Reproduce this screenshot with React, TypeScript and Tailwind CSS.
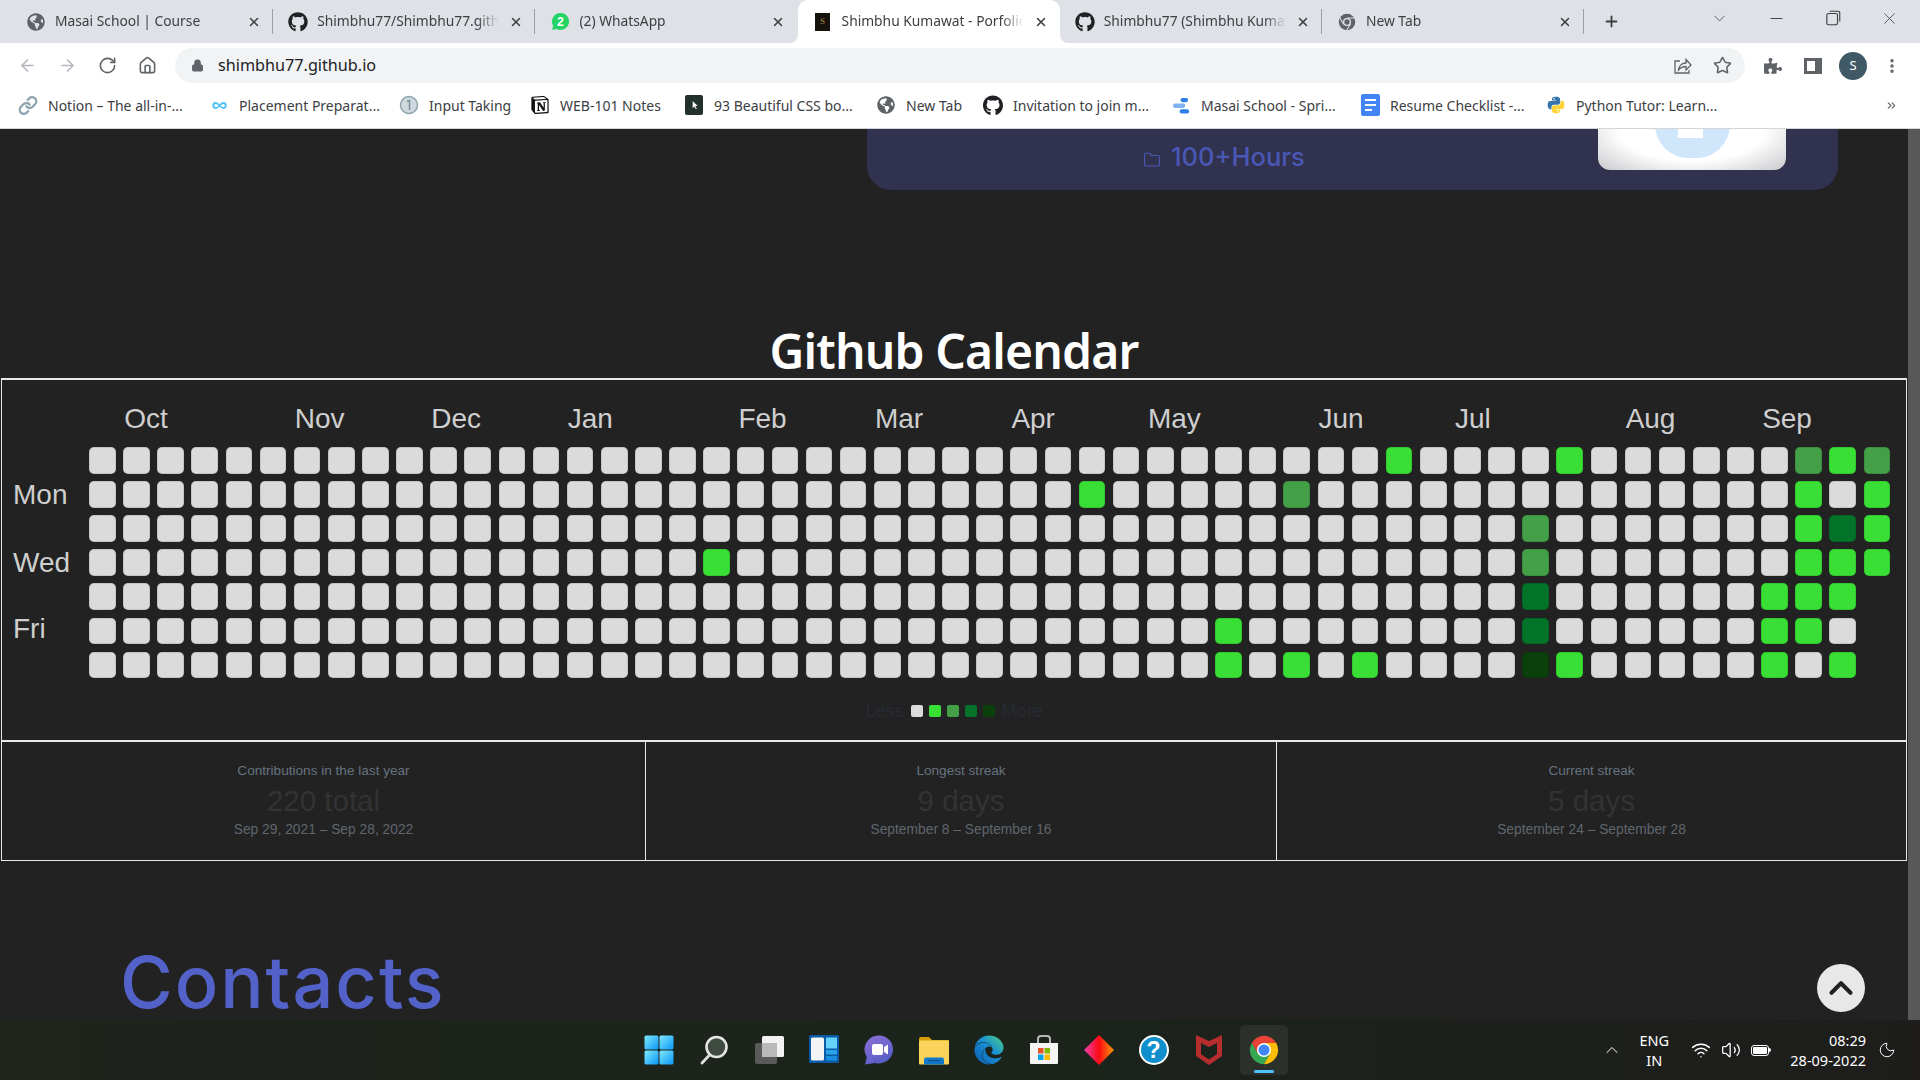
import React from 'react';
import { ArrowLeft, ArrowRight, RotateCw, House, Lock, Star, X, Plus, ChevronDown, Minus, Link, Infinity as InfinityIcon, ChevronUp, Wifi, Volume2, Moon, Folder, EllipsisVertical, ChevronsRight } from 'lucide-react';
import { FaGithub, FaGlobeAmericas, FaPuzzlePiece, FaEdge } from 'react-icons/fa';
import { SiNotion } from 'react-icons/si';

const ChromeLogo = ({ className = '' }: { className?: string }) => (
  <svg viewBox="0 0 24 24" className={className}>
    <path fill="#ea4335" d="M20.66 7A10 10 0 0 0 3.34 7L7.67 14.5 12 7z" />
    <path fill="#34a853" d="M3.34 7A10 10 0 0 0 12 22L16.33 14.5H7.67z" />
    <path fill="#fbbc04" d="M12 22A10 10 0 0 0 20.66 7H12L16.33 14.5z" />
    <circle cx="12" cy="12" r="5" fill="#fff" />
    <circle cx="12" cy="12" r="3.9" fill="#4285f4" />
  </svg>
);

const WhatsappIcon = () => (
  <svg viewBox="0 0 20 20" className="w-[19px] h-[19px]">
    <path fill="#25d366" d="M10 1a9 9 0 0 0-7.7 13.6L1.2 19l4.5-1.1A9 9 0 1 0 10 1z" />
    <circle cx="10" cy="10" r="6.6" fill="#25d366" />
    <text x="10" y="14.5" textAnchor="middle" fontSize="13" fontWeight="700" fill="#fff" fontFamily="Liberation Sans">2</text>
  </svg>
);

const PortfolioIcon = () => (
  <div className="w-[15px] h-[18px] bg-[#15120c] flex items-center justify-center text-[9px] leading-none text-[#b08d45] font-['Liberation_Serif',serif]">S</div>
);

function ChromeMono() {
  return (
    <svg viewBox="0 0 24 24" className="w-[18px] h-[18px]">
      <circle cx="12" cy="12" r="11" fill="#5f6368" />
      <circle cx="12" cy="12" r="5.4" fill="#dee1e6" />
      <circle cx="12" cy="12" r="3.6" fill="#5f6368" />
      <path d="M12 6.6h9.6M7.4 15 2.6 6.8M16.6 14.8 11.6 23" stroke="#dee1e6" strokeWidth="1.4" />
    </svg>
  );
}

const tabs = [
  { icon: <FaGlobeAmericas className="w-[18px] h-[18px] text-[#5f6368]" />, title: 'Masai School | Course' },
  { icon: <FaGithub className="w-5 h-5 text-[#202124]" />, title: 'Shimbhu77/Shimbhu77.github.io' },
  { icon: <WhatsappIcon />, title: '(2) WhatsApp' },
  { icon: <PortfolioIcon />, title: 'Shimbhu Kumawat - Porfolio Website', active: true },
  { icon: <FaGithub className="w-5 h-5 text-[#202124]" />, title: 'Shimbhu77 (Shimbhu Kumawat)' },
  { icon: <ChromeMono />, title: 'New Tab' },
];

const TabBar = () => (
  <div className="h-[43px] bg-[#dee1e6] flex items-end pl-[11px] shrink-0">
    {tabs.map((t, i) => (
      <div
        key={t.title}
        className={`relative w-[262.2px] h-[43px] flex items-center pl-[15px] ${t.active ? 'bg-white rounded-t-[10px]' : ''}`}
      >
        <div className="w-5 flex justify-center shrink-0">{t.icon}</div>
        <div className="ml-[9px] w-[182px] overflow-hidden whitespace-nowrap text-[13.8px] text-[#3c4043] [mask-image:linear-gradient(to_right,black_88%,transparent)]">
          {t.title}
        </div>
        <X className="ml-[10px] w-[14px] h-[14px] text-[#3c4043] shrink-0" strokeWidth={2.6} />
        {!t.active && i !== 2 && (
          <div className="absolute right-0 top-[9px] h-[25px] w-px bg-[#9aa0a6]" />
        )}
        {t.active && (
          <>
            <div className="absolute -left-2 bottom-0 w-2 h-2 bg-white"><div className="w-full h-full bg-[#dee1e6] rounded-br-[8px]" /></div>
            <div className="absolute -right-2 bottom-0 w-2 h-2 bg-white"><div className="w-full h-full bg-[#dee1e6] rounded-bl-[8px]" /></div>
          </>
        )}
      </div>
    ))}
    <div className="h-[43px] flex items-center ml-[19px]">
      <Plus className="w-[17px] h-[17px] text-[#3c4043]" strokeWidth={2.6} />
    </div>
    <div className="h-[43px] flex items-start pt-[9px] ml-[90px] gap-[38px] text-[#3c4043]">
      <ChevronDown className="w-[19px] h-[19px]" strokeWidth={1} />
      <Minus className="w-[19px] h-[19px]" strokeWidth={1.2} />
      <svg viewBox="0 0 16 16" className="w-[18px] h-[18px]" fill="none" stroke="currentColor" strokeWidth="1">
        <rect x="2.5" y="4" width="9.5" height="10" rx="1.5" />
        <path d="M5 2h7.5A1.5 1.5 0 0 1 14 3.5V11" />
      </svg>
      <X className="w-[19px] h-[19px]" strokeWidth={1} />
    </div>
  </div>
);

const Toolbar = () => (
  <div className="h-[41px] pt-[4px] bg-white flex items-center shrink-0">
    <div className="flex items-center pl-[18px] gap-[21px] w-[175px]">
      <ArrowLeft className="w-[19px] h-[19px] text-[#b4b7bb]" strokeWidth={2} />
      <ArrowRight className="w-[19px] h-[19px] text-[#b4b7bb]" strokeWidth={2} />
      <RotateCw className="w-[19px] h-[19px] text-[#5f6368]" strokeWidth={2} />
      <House className="w-[19px] h-[19px] text-[#5f6368]" strokeWidth={2} />
    </div>
    <div className="w-[1570px] h-[35px] rounded-full bg-[#f1f3f4] flex items-center pl-[16px]">
      <Lock className="w-[13px] h-[13px] text-[#5f6368] fill-[#5f6368]" />
      <span className="ml-[14px] text-[16.2px] text-[#202124]">shimbhu77.github.io</span>
      <svg viewBox="0 0 20 20" className="ml-auto w-5 h-5 text-[#5f6368]" fill="none" stroke="currentColor" strokeWidth="1.3">
        <path d="M8 5H3v12h14v-3" />
        <path d="M6.5 14c.4-4 3.4-7 7.5-7V3.5l5 5.5-5 5v-3.5c-3.500 0-5.500 1-7.500 3.500z" />
      </svg>
      <Star className="ml-[21px] mr-[13px] w-[19px] h-[19px] text-[#5f6368]" strokeWidth={2} />
    </div>
    <FaPuzzlePiece className="ml-[19px] w-[18px] h-[18px] text-[#5f6368]" />
    <div className="ml-[22px] w-[18px] h-[16px] border-[3px] border-r-[7px] border-[#5f6368]" />
    <div className="ml-[17px] w-7 h-7 rounded-full bg-[#3f5966] flex items-center justify-center text-[13px] text-white">S</div>
    <EllipsisVertical className="ml-[16px] w-[18px] h-[18px] text-[#5f6368]" strokeWidth={2.6} />
  </div>
);

const MasaiMark = () => (
  <svg viewBox="0 0 20 20" className="w-[19px] h-[19px]">
    <rect x="9" y="2" width="8" height="4.500" rx="2.200" fill="#2f7fe8" />
    <rect x="1" y="8" width="13" height="4.500" rx="2.200" fill="#7fb2f5" />
    <rect x="8" y="14" width="10" height="4.500" rx="2.200" fill="#2f7fe8" />
  </svg>
);

const DocsMark = () => (
  <div className="w-[19px] h-[22px] rounded-[2px] bg-[#4285f4] flex flex-col justify-center gap-[3px] px-[4px]">
    <div className="h-[2px] bg-white" />
    <div className="h-[2px] bg-white" />
    <div className="h-[2px] w-[7px] bg-white" />
  </div>
);

const PythonMark = () => (
  <svg viewBox="0 0 24 24" className="w-[22px] h-[22px]">
    <path fill="#3776ab" d="M11.900 2C6.900 2 7.200 4.200 7.200 4.200v2.300h4.800v.7H5.300S2 6.800 2 12s2.900 5 2.900 5h1.700v-2.400s-.1-2.900 2.800-2.900h4.800s2.700 0 2.700-2.600V4.800S16.900 2 11.900 2zM9.300 3.500a.9.9 0 1 1 0 1.700.9.9 0 0 1 0-1.700z" />
    <path fill="#ffd43b" transform="rotate(180 12 12)" d="M11.900 2C6.900 2 7.200 4.200 7.200 4.200v2.300h4.800v.7H5.300S2 6.800 2 12s2.900 5 2.900 5h1.700v-2.400s-.1-2.900 2.800-2.900h4.800s2.700 0 2.700-2.600V4.800S16.900 2 11.900 2zM9.300 3.500a.9.9 0 1 1 0 1.700.9.9 0 0 1 0-1.700z" />
  </svg>
);

const bookmarks = [
  { icon: <Link className="w-[21px] h-[21px] text-[#90a4ae]" strokeWidth={2.8} />, label: 'Notion – The all-in-...', w: 'w-[141px]' },
  { icon: <InfinityIcon className="w-[15px] h-[15px] text-[#4fc3f7]" strokeWidth={3} />, label: 'Placement Preparat...', w: 'w-[140px]' },
  {
    icon: (
      <svg viewBox="0 0 20 20" className="w-5 h-5">
        <circle cx="10" cy="10" r="8.500" fill="#cfd8dc" stroke="#90a4ae" strokeWidth="1.500" />
        <path d="M8 6.500l2.500-1V15" fill="none" stroke="#78909c" strokeWidth="1.500" />
      </svg>
    ),
    label: 'Input Taking',
    w: 'w-[81px]',
  },
  { icon: <SiNotion className="w-[18px] h-[18px] text-[#111]" />, label: 'WEB-101 Notes', w: 'w-[104px]' },
  {
    icon: (
      <div className="w-[18px] h-[20px] rounded-[2px] bg-[#22312c] flex items-center justify-center">
        <svg viewBox="0 0 12 12" className="w-[11px] h-[11px]">
          <path d="M4 1l0 8 2-2 1.500 3 1-.5L7 6.500h2.500z" fill="#fff" />
        </svg>
      </div>
    ),
    label: '93 Beautiful CSS bo...',
    w: 'w-[142px]',
  },
  { icon: <FaGlobeAmericas className="w-[18px] h-[18px] text-[#5f6368]" />, label: 'New Tab', w: 'w-[57px]' },
  { icon: <FaGithub className="w-[21px] h-[21px] text-[#202124]" />, label: 'Invitation to join m...', w: 'w-[138px]' },
  { icon: <MasaiMark />, label: 'Masai School - Spri...', w: 'w-[139px]' },
  { icon: <DocsMark />, label: 'Resume Checklist -...', w: 'w-[136px]' },
  { icon: <PythonMark />, label: 'Python Tutor: Learn...', w: 'w-[140px]' },
];

const BookmarkBar = () => (
  <div className="h-[45px] pb-[2px] bg-white border-b border-[#d3d5d8] flex items-center pl-[18px] gap-[20px] shrink-0">
    {bookmarks.map((b) => (
      <div key={b.label} className="flex items-center gap-[10px]">
        <div className="w-5 flex justify-center">{b.icon}</div>
        <span className={`${b.w} whitespace-nowrap text-[14px] text-[#3c4043]`}>{b.label}</span>
      </div>
    ))}
    <ChevronsRight className="ml-auto mr-[22px] w-[13px] h-[13px] text-[#5f6368]" />
  </div>
);

const months = [
  { name: 'Oct', col: 2 }, { name: 'Nov', col: 7 }, { name: 'Dec', col: 11 }, { name: 'Jan', col: 15 },
  { name: 'Feb', col: 20 }, { name: 'Mar', col: 24 }, { name: 'Apr', col: 28 }, { name: 'May', col: 32 },
  { name: 'Jun', col: 37 }, { name: 'Jul', col: 41 }, { name: 'Aug', col: 46 }, { name: 'Sep', col: 50 },
];

const LEVELS = ['bg-[#dcdbdb]', 'bg-[#39df35]', 'bg-[#43a047]', 'bg-[#03732a]', 'bg-[#0b3f0b]'];

// col:row -> level, everything else is empty
const active: Record<string, number> = {
  '38:0': 1, '43:0': 1, '50:0': 2, '51:0': 1, '52:0': 2,
  '29:1': 1, '35:1': 2, '50:1': 1, '52:1': 1,
  '42:2': 2, '50:2': 1, '51:2': 3, '52:2': 1,
  '18:3': 1, '42:3': 2, '50:3': 1, '51:3': 1, '52:3': 1,
  '42:4': 3, '49:4': 1, '50:4': 1, '51:4': 1,
  '33:5': 1, '42:5': 3, '49:5': 1, '50:5': 1,
  '33:6': 1, '35:6': 1, '37:6': 1, '42:6': 4, '43:6': 1, '49:6': 1, '51:6': 1,
};

const cells: { key: string; level: number }[] = [];
for (let c = 0; c < 53; c++) {
  for (let r = 0; r < 7; r++) {
    if (c === 52 && r > 3) continue;
    cells.push({ key: `${c}:${r}`, level: active[`${c}:${r}`] ?? 0 });
  }
}

const dayLabels = ['', 'Mon', '', 'Wed', '', 'Fri', ''];

const Calendar = () => (
  <div className="ml-px w-[1906px] h-[364px] border-2 border-l border-r border-[#e8e8e8] font-['Liberation_Sans',sans-serif]">
    <div className="flex">
      <div className="w-[87px] pl-[11px] pt-[68px] grid grid-rows-[repeat(7,26.67px)] gap-y-[7.46px] shrink-0">
        {dayLabels.map((d, i) => (
          <div key={i} className={`text-[28px] leading-[26.67px] text-[#cfcfcf] ${d === 'Fri' ? '-mt-[3px]' : ''}`}>{d}</div>
        ))}
      </div>
      <div>
        <div className="h-[67px] grid grid-cols-[repeat(53,26.67px)] gap-x-[7.48px] pt-[23px] pl-px">
          {months.map((m) => (
            <div key={m.name} className="text-[28px] leading-[32px] whitespace-nowrap text-[#cfcfcf]" style={{ gridColumnStart: m.col }}>
              {m.name}
            </div>
          ))}
        </div>
        <div className="grid grid-flow-col grid-cols-[repeat(53,26.67px)] grid-rows-[repeat(7,26.67px)] gap-x-[7.48px] gap-y-[7.46px]">
          {cells.map((c) => (
            <div key={c.key} className={`rounded-[5px] border border-black/10 ${LEVELS[c.level]}`} />
          ))}
        </div>
      </div>
    </div>
    <div className="mt-[22px] flex items-center justify-center h-[20px] text-[18px] text-[#262b33]">
      <span className="mr-[7px]">Less</span>
      <div className="flex gap-[6px]">
        {LEVELS.map((l) => (
          <div key={l} className={`w-3 h-3 rounded-[2px] ${l}`} />
        ))}
      </div>
      <span className="ml-[7px]">More</span>
    </div>
  </div>
);

const stats = [
  { label: 'Contributions in the last year', value: '220 total', range: 'Sep 29, 2021 – Sep 28, 2022' },
  { label: 'Longest streak', value: '9 days', range: 'September 8 – September 16' },
  { label: 'Current streak', value: '5 days', range: 'September 24 – September 28' },
];

const Stats = () => (
  <div className="ml-px w-[1906px] h-[119px] grid grid-cols-[643px_631px_1fr] border-x border-b border-[#e8e8e8] font-['Liberation_Sans',sans-serif] text-center">
    {stats.map((s, i) => (
      <div key={s.label} className={`pt-[20px] ${i > 0 ? 'border-l border-[#e8e8e8]' : ''}`}>
        <div className="text-[13.6px] leading-[17px] text-[#667380]">{s.label}</div>
        <div className="text-[29.5px] leading-[38px] mt-[3px] text-[#333333]">{s.value}</div>
        <div className="text-[13.8px] leading-[17px] mt-[1px] text-[#5f666e]">{s.range}</div>
      </div>
    ))}
  </div>
);

const Win = () => (
  <svg viewBox="0 0 30 30" className="w-[30px] h-[30px]">
    <defs>
      <linearGradient id="win" x1="0" y1="0" x2="1" y2="1">
        <stop offset="0" stopColor="#7fe9ff" />
        <stop offset="1" stopColor="#0a97f5" />
      </linearGradient>
    </defs>
    <rect x="0.500" y="0.500" width="14" height="14" rx="1.500" fill="url(#win)" />
    <rect x="15.500" y="0.500" width="14" height="14" rx="1.500" fill="url(#win)" />
    <rect x="0.500" y="15.500" width="14" height="14" rx="1.500" fill="url(#win)" />
    <rect x="15.500" y="15.500" width="14" height="14" rx="1.500" fill="url(#win)" />
  </svg>
);

const SearchGlyph = () => (
  <svg viewBox="0 0 30 30" className="w-[30px] h-[30px]">
    <circle cx="17.500" cy="12" r="10" fill="#3f4a40" stroke="#e6e6e6" strokeWidth="2.600" />
    <path d="M10.500 20 3 28" stroke="#e0e0e0" strokeWidth="2.800" strokeLinecap="round" />
  </svg>
);

const TaskView = () => (
  <svg viewBox="0 0 30 30" className="w-[30px] h-[30px]">
    <rect x="1" y="8" width="22" height="21" rx="2" fill="#5a5a5a" />
    <rect x="8" y="1" width="22" height="21" rx="1.500" fill="#f2f2f2" />
    <rect x="8" y="8" width="15" height="14" fill="#b9b9b9" />
  </svg>
);

const Widgets = () => (
  <svg viewBox="0 0 30 30" className="w-[30px] h-[30px]">
    <rect x="0" y="0" width="30" height="28" rx="1.500" fill="#0b5aa6" />
    <rect x="2" y="2.500" width="13" height="23" rx="1.500" fill="#f4f4f4" />
    <rect x="17" y="2.500" width="11" height="11" fill="#65d2fb" />
    <rect x="17" y="15" width="11" height="4.500" fill="#27a4ec" />
    <rect x="17" y="21" width="11" height="4.500" fill="#1b8de0" />
  </svg>
);

const Chat = () => (
  <svg viewBox="0 0 30 30" className="w-[30px] h-[30px]">
    <defs>
      <linearGradient id="chat" x1="0.200" y1="0" x2="0.800" y2="1">
        <stop offset="0" stopColor="#8c6fd6" />
        <stop offset="1" stopColor="#4f5bc4" />
      </linearGradient>
    </defs>
    <path fill="url(#chat)" d="M15 0.500a14 14 0 1 1-4 27.400L1 29.500l1.800-7.500A14 14 0 0 1 15 0.500z" />
    <rect x="8" y="9" width="11" height="11" rx="2" fill="#fff" />
    <path d="M20 12l4-2.500v10L20 17z" fill="#fff" />
  </svg>
);

const Explorer = () => (
  <svg viewBox="0 0 30 30" className="w-[30px] h-[30px]">
    <path d="M0 4a2 2 0 0 1 2-2h8l3 3h17v8H0z" fill="#d69e0b" />
    <rect x="0" y="5.500" width="30" height="24" rx="1" fill="#fbd35b" />
    <path d="M5 29.500v-5a2 2 0 0 1 2-2h16a2 2 0 0 1 2 2v5z" fill="#0f78c8" />
    <rect x="9" y="25" width="12" height="1.200" fill="#0a4f8e" />
  </svg>
);

const EdgeDefs = () => (
  <svg width="0" height="0" className="absolute">
    <defs>
      <linearGradient id="edge" x1="0" y1="1" x2="1" y2="0">
        <stop offset="0" stopColor="#0b5aa8" />
        <stop offset="0.550" stopColor="#1a90d8" />
        <stop offset="1" stopColor="#4ed178" />
      </linearGradient>
    </defs>
  </svg>
);

const Store = () => (
  <svg viewBox="0 0 30 30" className="w-[30px] h-[30px]">
    <path d="M9 8V4a3 3 0 0 1 3-3h6a3 3 0 0 1 3 3v4" fill="none" stroke="#b8b8b8" strokeWidth="2" />
    <path d="M1 8h28v20a1 1 0 0 1-1 1H2a1 1 0 0 1-1-1z" fill="#f4f4f4" />
    <rect x="9" y="13" width="5.500" height="5.500" fill="#e8532a" />
    <rect x="15.500" y="13" width="5.500" height="5.500" fill="#7fba00" />
    <rect x="9" y="19.500" width="5.500" height="5.500" fill="#00a4ef" />
    <rect x="15.500" y="19.500" width="5.500" height="5.500" fill="#ffb900" />
  </svg>
);

const Diamond = () => (
  <svg viewBox="0 0 30 30" className="w-[30px] h-[30px]">
    <defs>
      <linearGradient id="gem" x1="0" y1="0" x2="1" y2="0">
        <stop offset="0" stopColor="#f03fb0" />
        <stop offset="0.500" stopColor="#fb0a14" />
        <stop offset="1" stopColor="#f79a06" />
      </linearGradient>
    </defs>
    <path d="M15 0 30 15 15 30 0 15z" fill="url(#gem)" />
  </svg>
);

const Help = () => (
  <div className="w-[30px] h-[30px] rounded-full bg-[#0f8fcc] border-2 border-white flex items-center justify-center text-white text-[23px] font-bold leading-none font-['Liberation_Sans',sans-serif]">?</div>
);

const McAfee = () => (
  <svg viewBox="0 0 30 30" className="w-[30px] h-[30px]">
    <path fill="#b52d2d" d="M2 0l13 6 13-6v21l-13 9-13-9zM7 8v11l8 5.500L23 19V8l-8 4z" fillRule="evenodd" />
  </svg>
);

const taskbarIcons = [
  <Win key="win" />, <SearchGlyph key="search" />, <TaskView key="tasks" />, <Widgets key="widgets" />,
  <Chat key="chat" />, <Explorer key="explorer" />,
  <FaEdge key="edge" className="w-[30px] h-[30px]" fill="url(#edge)" />,
  <Store key="store" />, <Diamond key="gem" />, <Help key="help" />, <McAfee key="mcafee" />,
];

const Taskbar = () => (
  <div className="h-[60px] shrink-0 grid grid-cols-[1fr_auto_1fr] items-center bg-gradient-to-r from-[#1e231c] via-[#1b241b] to-[#1e1d1c] text-white font-['Noto_Sans',sans-serif]">
    <EdgeDefs />
    <div />
    <div className="flex items-center gap-[7px] ml-[2px]">
      {taskbarIcons.map((icon) => (
        <div key={icon.key} className="w-[48px] h-[50px] flex items-center justify-center">{icon}</div>
      ))}
      <div className="relative w-[48px] h-[50px] rounded-[5px] bg-[#2b312a] flex items-center justify-center">
        <ChromeLogo className="w-[34px] h-[34px]" />
        <div className="absolute bottom-[2px] left-[14px] w-5 h-[3px] rounded-full bg-[#4cc2ff]" />
      </div>
    </div>
    <div className="flex items-center justify-end pr-[24px]">
      <ChevronUp className="w-5 h-5" strokeWidth={1.2} />
      <div className="ml-[12px] w-[40px] text-center text-[14.5px] leading-[20px]">ENG<br />IN</div>
      <Wifi className="ml-[17px] w-5 h-5" strokeWidth={1.8} />
      <Volume2 className="ml-[10px] w-5 h-5" strokeWidth={1.5} />
      <div className="ml-[10px] relative w-[18px] h-[11px] rounded-[3px] border border-white p-px">
        <div className="w-full h-full bg-white rounded-[1px]" />
      </div>
      <div className="w-[2px] h-[4px] bg-white rounded-r-sm" />
      <div className="ml-[19px] text-right text-[14.5px] leading-[20px]">08:29<br />28-09-2022</div>
      <Moon className="ml-[12px] w-[18px] h-[18px]" strokeWidth={1.3} />
    </div>
  </div>
);

const Card = () => (
  <div className="ml-[867px] w-[971px] h-[61px] bg-[#303250] rounded-b-[24px] flex items-start">
    <div className="ml-[276px] mt-[11px] flex items-center gap-[10px] text-[#4b57b5]">
      <Folder className="w-[18px] h-[18px] mt-[6px]" strokeWidth={1.5} />
      <span className="text-[25.5px] leading-[34px] font-medium font-['Inter',sans-serif]">100+Hours</span>
    </div>
    <div className="relative ml-auto mr-[52px] w-[188px] h-[41px] rounded-b-[12px] overflow-hidden bg-[radial-gradient(ellipse_at_50%_0%,#ffffff_55%,#c9c9cd_100%)]">
      <div className="absolute left-[57px] -top-[38px] w-[75px] h-[67px] rounded-full bg-[#cfe6fb]" />
      <div className="absolute left-[80px] top-0 w-[25px] h-[9px] bg-white" />
    </div>
  </div>
);

export default function App() {
  return (
    <div className="h-screen w-full flex flex-col overflow-hidden bg-[#222222] font-['Noto_Sans',sans-serif]">
      <TabBar />
      <Toolbar />
      <BookmarkBar />
      <div className="relative flex-1 flex overflow-hidden">
        <main className="flex-1 overflow-hidden">
          <Card />
          <h2 className="mt-[128px] h-[60px] text-center text-[48px] tracking-[-0.85px] leading-[66px] font-semibold text-white">Github Calendar</h2>
          <Calendar />
          <Stats />
          <h2 className="mt-[81px] pl-[120px] text-[72px] tracking-[2px] leading-[80px] font-medium text-[#5362c9] font-['Inter',sans-serif]">Contacts</h2>
        </main>
        <div className="w-3 bg-[#585858] shrink-0" />
        <button className="absolute left-[1817px] top-[835px] w-[48px] h-[48px] rounded-full bg-[#e8e8e8] flex items-center justify-center">
          <ChevronUp className="w-[38px] h-[38px] text-[#222222]" strokeWidth={2.6} />
        </button>
      </div>
      <Taskbar />
    </div>
  );
}
